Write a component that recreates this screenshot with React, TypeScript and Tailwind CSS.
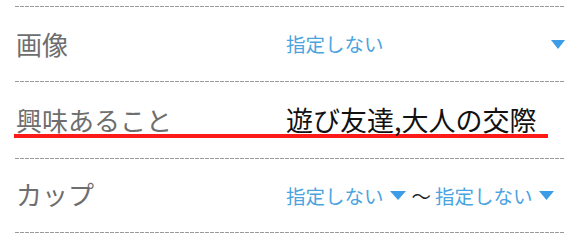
import React from "react";

function Dash() {
  return (
    <div className="h-px w-full bg-[repeating-linear-gradient(to_right,#9a9a9a_0px,#9a9a9a_4px,transparent_4px,transparent_5px)]" />
  );
}

function Tri({ w = 14 }: { w?: number }) {
  return (
    <svg width={w} height="9" viewBox={`0 0 ${w} 9`} className="shrink-0">
      <polygon points={`0,0 ${w},0 ${w / 2},9`} fill="#3d9ce6" />
    </svg>
  );
}

export default function App() {
  return (
    <div
      className="w-[580px] h-[239px] bg-white px-[15px] pt-[6px] overflow-hidden"
      style={{ fontFamily: '"Noto Sans CJK JP", "Noto Sans", sans-serif' }}
    >
      <Dash />
      <div className="h-[74px] flex items-center">
        <div className="w-[271px] pl-px text-[26px] leading-none text-[#6e6e6e]">画像</div>
        <div className="flex-1 flex items-center justify-between text-[19.5px] leading-none text-[#4ba4e0]">
          <span>指定しない</span>
          <Tri />
        </div>
      </div>
      <Dash />
      <div className="h-[76px] pt-[22px]">
        <div className="-ml-px w-[534px] flex items-end border-b-[4px] border-[#ff1a1a] h-[34px]">
          <div className="w-[272px] pl-[2px] text-[26px] leading-[28px] text-[#6e6e6e]">興味あること</div>
          <div className="text-[27px] leading-[28px] text-[#111]">遊び友達,大人の交際</div>
        </div>
      </div>
      <Dash />
      <div className="h-[73px] flex items-center">
        <div className="w-[271px] pl-px text-[26px] leading-none text-[#6e6e6e] -mt-[4px]">カップ</div>
        <div className="flex items-center text-[19.5px] leading-none text-[#4ba4e0]">
          <span>指定しない</span>
          <span className="ml-[6px]"><Tri w={16} /></span>
          <span className="ml-[6px] text-[#222] text-[19.5px]">〜</span>
          <span className="ml-[4px]">指定しない</span>
          <span className="ml-[6px]"><Tri w={15} /></span>
        </div>
      </div>
      <Dash />
    </div>
  );
}
